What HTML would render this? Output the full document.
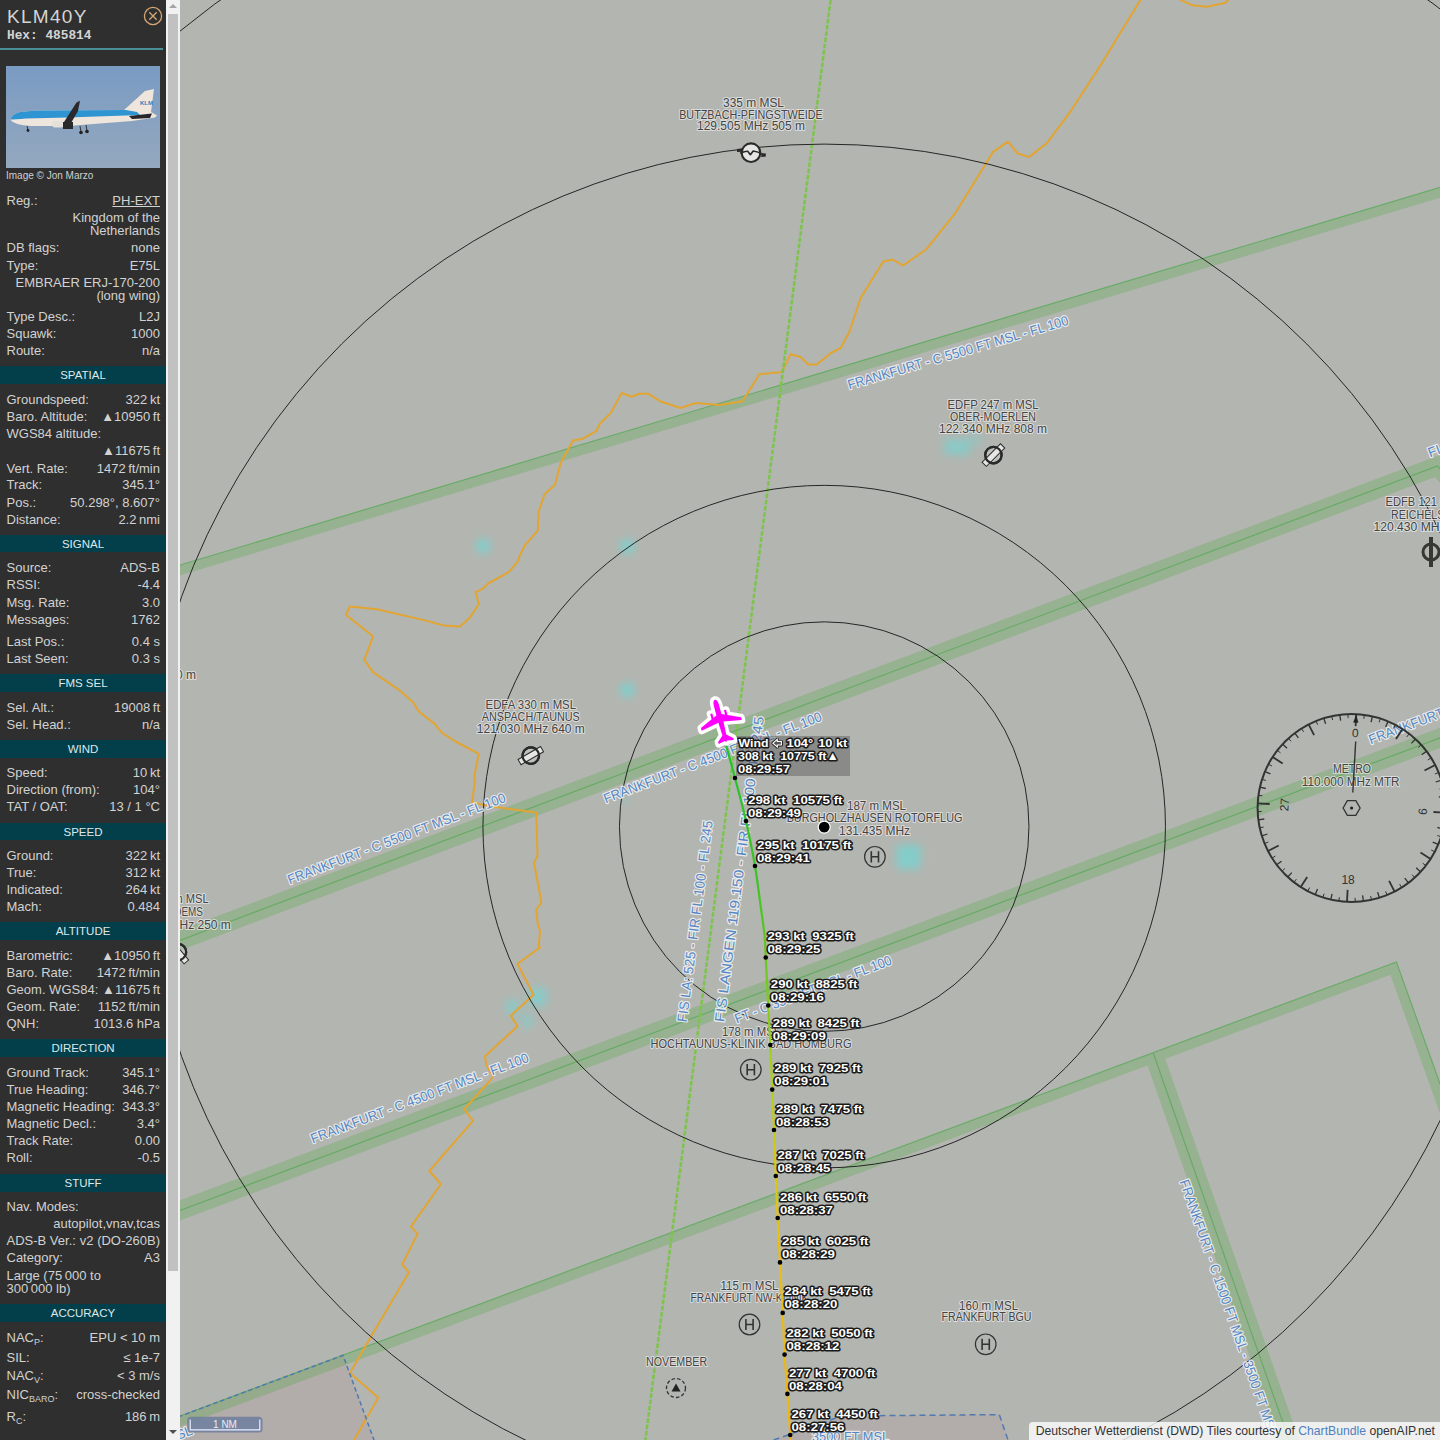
<!DOCTYPE html>
<html><head><meta charset="utf-8"><style>
*{margin:0;padding:0;box-sizing:border-box}
html,body{width:1440px;height:1440px;overflow:hidden;background:#b3b5b0;font-family:"Liberation Sans",sans-serif}
#map{position:absolute;left:0;top:0;width:1440px;height:1440px}
#map text{font-family:"Liberation Sans",sans-serif}
.ap{font-size:12px;fill:#444;stroke:#e8e8e8;stroke-opacity:0.75;stroke-width:2.2px;paint-order:stroke;stroke-linejoin:round}
.bl{font-size:13.6px;fill:#5586c4;stroke:#f4f4f4;stroke-opacity:0.85;stroke-width:2.4px;paint-order:stroke;stroke-linejoin:round}
.rz{font-size:12px;fill:#333}
.tk{font-size:11.8px;font-weight:bold;fill:#fff;stroke:#1a1a1a;stroke-width:3px;paint-order:stroke;stroke-linejoin:round}
.sc{font-size:10px;fill:#e8ecf4}
#side{position:absolute;left:0;top:0;width:166px;height:1440px;background:#2f2f2f;color:#d2d2d2;font-size:13px}
#sb{position:absolute;left:166px;top:0;width:14px;height:1440px;background:#f1f1f1}
#thumb{position:absolute;left:2px;top:14px;width:10px;height:1257px;background:#c1c1c1}
.lb{position:absolute;left:6.5px;height:16px;line-height:16px;white-space:nowrap}
.vl{position:absolute;right:6px;height:16px;line-height:16px;white-space:nowrap;text-align:right}
.hd{position:absolute;left:0;width:166px;height:17.6px;line-height:18.6px;background:#023f4a;color:#dde8ea;text-align:center;font-size:11.5px}
sub{font-size:9px;vertical-align:-3px;line-height:0}
#title{position:absolute;left:7px;top:6px;font-size:19px;letter-spacing:1.3px;color:#d4d4d4;line-height:22px}
#hex{position:absolute;left:7px;top:29px;font-family:"Liberation Mono",monospace;font-weight:bold;font-size:12.8px;color:#d4d4d4;line-height:14px}
#tline{position:absolute;left:0;top:48px;width:163px;height:2px;background:#4a8e98}
#cap{position:absolute;left:6px;top:170px;font-size:10px;color:#cfcfcf;line-height:12px}
#attr{position:absolute;left:1028.7px;top:1422.2px;width:412px;height:18px;background:rgba(255,255,255,0.78);border-top-left-radius:4px;font-size:12.2px;line-height:18px;color:#333;padding-left:7px;white-space:nowrap}
#attr span{color:#4f7fbf}
</style></head><body>
<svg id="map" width="1440" height="1440" viewBox="0 0 1440 1440">
<path d="M150,1427.5 L343,1355.3 L374,1440 L150,1440 Z" fill="#b2acaa"/>
<path d="M773.6,1440 L841.7,1416 L999.3,1414.6 L1008,1440 Z" fill="#b2acaa"/>
<defs><filter id="b3" x="-100%" y="-100%" width="300%" height="300%"><feGaussianBlur stdDeviation="3.2"/></filter><filter id="b5" x="-100%" y="-100%" width="300%" height="300%"><feGaussianBlur stdDeviation="4.5"/></filter></defs>
<rect x="476.5" y="539.5" width="13" height="13" fill="#80cfcc" opacity="1" filter="url(#b5)"/>
<rect x="620.7" y="539.9" width="13" height="13" fill="#80cfcc" opacity="1" filter="url(#b5)"/>
<rect x="620.7" y="683.6" width="13" height="13" fill="#80cfcc" opacity="1" filter="url(#b5)"/>
<rect x="620.5" y="795.5" width="9" height="9" fill="#80cfcc" opacity="0.3" filter="url(#b3)"/>
<rect x="896.6" y="844.8" width="24" height="24" fill="#80cfcc" opacity="0.95" filter="url(#b5)"/>
<rect x="944.0" y="439.0" width="26" height="16" fill="#80cfcc" opacity="0.8" filter="url(#b5)"/>
<rect x="968.0" y="435.0" width="14" height="10" fill="#80cfcc" opacity="0.5" filter="url(#b5)"/>
<rect x="528.6" y="987.8" width="18" height="18" fill="#80cfcc" opacity="0.85" filter="url(#b5)"/>
<rect x="505.6" y="1000.0" width="14" height="14" fill="#80cfcc" opacity="0.75" filter="url(#b5)"/>
<rect x="521.0" y="1015.0" width="12" height="12" fill="#80cfcc" opacity="0.7" filter="url(#b5)"/>
<path d="M151.4,578.8 L1461.4,186.2" fill="none" stroke="#5daa4f" stroke-opacity="0.32" stroke-width="10" stroke-linejoin="miter"/>
<path d="M150.0,574.0 L1460.0,181.4" fill="none" stroke="#52a852" stroke-opacity="0.72" stroke-width="1.15"/>
<path d="M150.0,951.7 L1437.5,466.0 L1460.0,491.0" fill="none" stroke="#5daa4f" stroke-opacity="0.32" stroke-width="19" stroke-linejoin="miter"/>
<path d="M150.0,951.7 L1437.5,466.0 L1460.0,491.0" fill="none" stroke="#52a852" stroke-opacity="0.72" stroke-width="1.15"/>
<path d="M150.0,1221.7 L1460.0,730.4" fill="none" stroke="#5daa4f" stroke-opacity="0.32" stroke-width="19" stroke-linejoin="miter"/>
<path d="M150.0,1221.7 L1460.0,730.4" fill="none" stroke="#52a852" stroke-opacity="0.72" stroke-width="1.15"/>
<path d="M151.7,1431.9 L1393.4,968.4 L1606.5,1563.6" fill="none" stroke="#5daa4f" stroke-opacity="0.32" stroke-width="10" stroke-linejoin="miter"/>
<path d="M150.0,1427.2 L1396.4,961.9 L1611.2,1561.9" fill="none" stroke="#52a852" stroke-opacity="0.72" stroke-width="1.15"/>
<defs><clipPath id="c5"><path d="M153.5,1436.5 L1399.9,971.3 L1600,1600 L0,1600 Z"/></clipPath></defs>
<g clip-path="url(#c5)"><path d="M1146.3,1033.3 L1300.7,1473.3" fill="none" stroke="#5daa4f" stroke-opacity="0.32" stroke-width="19" stroke-linejoin="miter"/></g>
<path d="M1153.3,1053.3 L1300.7,1473.3" fill="none" stroke="#52a852" stroke-opacity="0.72" stroke-width="1.15"/>
<path d="M354.0,1440.0 L378.3,1397.8 L350.0,1373.0 L371.0,1336.6 L408.9,1272.4 L402.2,1264.5 L417.6,1233.6 L410.9,1226.6 L441.0,1184.0 L429.3,1171.0 L473.0,1120.8 L464.3,1109.2 L490.5,1080.0 L493.0,1076.3 L486.3,1065.0 L485.0,1056.3 L517.5,1026.3 L510.8,1015.8 L533.5,994.7 L517.5,963.8 L540.0,947.5 L538.8,946.3 L540.0,931.3 L537.5,922.5 L536.3,910.0 L541.3,902.5 L538.8,887.5 L533.8,862.5 L537.5,856.3 L536.3,812.5 L490.0,806.3 L472.0,802.5 L474.5,785.0 L475.0,772.5 L478.8,753.8 L456.4,742.0 L442.0,732.9 L434.7,723.9 L418.5,711.3 L413.1,702.2 L398.6,689.6 L373.3,672.4 L364.3,659.8 L373.0,636.3 L345.9,614.7 L349.9,606.5 L377.0,609.2 L423.9,620.1 L443.8,625.5 L460.0,626.4 L470.0,617.4 L479.0,603.8 L475.4,592.1 L481.7,589.4 L488.9,583.0 L508.8,572.2 L517.8,561.4 L519.6,556.0 L525.0,545.1 L537.7,530.7 L538.6,510.8 L539.2,510.0 L544.5,494.2 L555.0,484.8 L560.6,463.0 L573.0,440.6 L583.0,438.7 L596.2,431.2 L600.0,423.7 L611.2,412.4 L616.8,402.0 L621.7,393.0 L631.8,396.7 L639.3,393.7 L648.0,393.7 L660.0,401.2 L680.6,408.0 L695.6,403.0 L720.0,405.0 L742.5,401.2 L759.4,374.2 L781.9,372.0 L790.5,354.3 L800.6,357.0 L808.1,364.5 L816.7,364.5 L830.6,353.2 L840.7,348.0 L849.4,331.8 L860.6,298.0 L883.1,261.7 L892.5,259.5 L903.0,265.5 L926.2,249.3 L956.2,211.8 L986.2,163.1 L993.0,151.9 L1008.0,141.7 L1017.3,153.3 L1028.9,157.1 L1046.7,143.3 L1070.0,112.2 L1101.1,64.4 L1120.0,33.3 L1141.1,-1.0" fill="none" stroke="#e3a531" stroke-width="2" stroke-linejoin="round"/>
<path d="M1178.9,-1.0 L1191.1,4.9 L1206.7,6.7 L1225.6,2.7 L1228.9,-1.0" fill="none" stroke="#e3a531" stroke-width="2" stroke-linejoin="round"/>
<line x1="830.6" y1="0" x2="645.4" y2="1440" stroke="#7cc44a" stroke-width="2.5" stroke-dasharray="4.6 1.7"/>
<path d="M150,1427.5 L343,1355.3 L374,1440" fill="none" stroke="#4f79b0" stroke-width="1.5" stroke-dasharray="4.5 3"/>
<path d="M773.6,1440 L841.7,1416 L999.3,1414.6 L1008,1440" fill="none" stroke="#4f79b0" stroke-width="1.5" stroke-dasharray="6 4"/>
<circle cx="824.2" cy="826.6" r="204.75" fill="none" stroke="#262626" stroke-width="1.0"/>
<circle cx="824.2" cy="826.6" r="341.25" fill="none" stroke="#262626" stroke-width="1.0"/>
<circle cx="824.2" cy="826.6" r="682.50" fill="none" stroke="#262626" stroke-width="1.0"/>
<circle cx="824.2" cy="826.6" r="1023.75" fill="none" stroke="#262626" stroke-width="1.0"/>
<text x="753.5" y="106.6" text-anchor="middle" class="ap" textLength="61.0" lengthAdjust="spacingAndGlyphs">335 m MSL</text>
<text x="751.0" y="118.5" text-anchor="middle" class="ap" textLength="143.6" lengthAdjust="spacingAndGlyphs">BUTZBACH-PFINGSTWEIDE</text>
<text x="751.0" y="130.1" text-anchor="middle" class="ap" textLength="108.0" lengthAdjust="spacingAndGlyphs">129.505 MHz 505 m</text>
<text x="993.0" y="408.7" text-anchor="middle" class="ap" textLength="91.0" lengthAdjust="spacingAndGlyphs">EDFP 247 m MSL</text>
<text x="993.0" y="420.7" text-anchor="middle" class="ap" textLength="86.0" lengthAdjust="spacingAndGlyphs">OBER-MOERLEN</text>
<text x="993.0" y="433.1" text-anchor="middle" class="ap" textLength="108.0" lengthAdjust="spacingAndGlyphs">122.340 MHz 808 m</text>
<text x="530.8" y="708.7" text-anchor="middle" class="ap" textLength="90.5" lengthAdjust="spacingAndGlyphs">EDFA 330 m MSL</text>
<text x="530.8" y="720.7" text-anchor="middle" class="ap" textLength="98.0" lengthAdjust="spacingAndGlyphs">ANSPACH/TAUNUS</text>
<text x="530.8" y="733.1" text-anchor="middle" class="ap" textLength="108.0" lengthAdjust="spacingAndGlyphs">121.030 MHz 640 m</text>
<text x="876.5" y="810.1" text-anchor="middle" class="ap" textLength="59.0" lengthAdjust="spacingAndGlyphs">187 m MSL</text>
<text x="874.5" y="822.4" text-anchor="middle" class="ap" textLength="175.7" lengthAdjust="spacingAndGlyphs">BURGHOLZHAUSEN ROTORFLUG</text>
<text x="874.5" y="834.6" text-anchor="middle" class="ap" textLength="71.0" lengthAdjust="spacingAndGlyphs">131.435 MHz</text>
<text x="751.0" y="1035.6" text-anchor="middle" class="ap" textLength="58.0" lengthAdjust="spacingAndGlyphs">178 m MSL</text>
<text x="751.0" y="1047.8" text-anchor="middle" class="ap" textLength="201.0" lengthAdjust="spacingAndGlyphs">HOCHTAUNUS-KLINIK BAD HOMBURG</text>
<text x="749.5" y="1290.1" text-anchor="middle" class="ap" textLength="58.0" lengthAdjust="spacingAndGlyphs">115 m MSL</text>
<text x="749.5" y="1302.4" text-anchor="middle" class="ap" textLength="118.0" lengthAdjust="spacingAndGlyphs">FRANKFURT NW-KLINIK</text>
<text x="988.6" y="1309.7" text-anchor="middle" class="ap" textLength="59.0" lengthAdjust="spacingAndGlyphs">160 m MSL</text>
<text x="986.5" y="1321.3" text-anchor="middle" class="ap" textLength="90.0" lengthAdjust="spacingAndGlyphs">FRANKFURT BGU</text>
<text x="676.6" y="1365.9" text-anchor="middle" class="ap" textLength="61.0" lengthAdjust="spacingAndGlyphs">NOVEMBER</text>
<text x="1352.0" y="773.4" text-anchor="middle" class="ap" textLength="38.0" lengthAdjust="spacingAndGlyphs">METRO</text>
<text x="1350.7" y="785.8" text-anchor="middle" class="ap" textLength="97.7" lengthAdjust="spacingAndGlyphs">110.000 MHz MTR</text>
<text x="1385.5" y="506.0" text-anchor="start" class="ap" textLength="90.0" lengthAdjust="spacingAndGlyphs">EDFB 121 m MSL</text>
<text x="1391.0" y="518.5" text-anchor="start" class="ap" textLength="80.0" lengthAdjust="spacingAndGlyphs">REICHELSHEIM</text>
<text x="1373.5" y="531.0" text-anchor="start" class="ap" textLength="115.0" lengthAdjust="spacingAndGlyphs">120.430 MHz 1180 m</text>
<text x="208.6" y="902.9" text-anchor="end" class="ap" textLength="90.0" lengthAdjust="spacingAndGlyphs">EDFG 118 m MSL</text>
<text x="203.0" y="915.7" text-anchor="end" class="ap" textLength="100.0" lengthAdjust="spacingAndGlyphs">GELNHAUSEN DEMS</text>
<text x="230.8" y="928.5" text-anchor="end" class="ap" textLength="108.0" lengthAdjust="spacingAndGlyphs">122.400 MHz 250 m</text>
<text x="196.0" y="678.8" text-anchor="end" class="ap" textLength="108.0" lengthAdjust="spacingAndGlyphs">123.000 MHz 640 m</text>
<text x="849.3" y="389.5" class="bl" textLength="229.4" lengthAdjust="spacingAndGlyphs" transform="rotate(-16.46 849.3 389.5)">FRANKFURT - C 5500 FT MSL - FL 100</text>
<text x="289.7" y="884.4" class="bl" textLength="232.3" lengthAdjust="spacingAndGlyphs" transform="rotate(-20.93 289.7 884.4)">FRANKFURT - C 5500 FT MSL - FL 100</text>
<text x="605.7" y="803.4" class="bl" textLength="232.3" lengthAdjust="spacingAndGlyphs" transform="rotate(-20.93 605.7 803.4)">FRANKFURT - C 4500 FT MSL - FL 100</text>
<text x="312.7" y="1143.4" class="bl" textLength="232.0" lengthAdjust="spacingAndGlyphs" transform="rotate(-20.70 312.7 1143.4)">FRANKFURT - C 4500 FT MSL - FL 100</text>
<text x="736.7" y="1023.4" class="bl" textLength="167.0" lengthAdjust="spacingAndGlyphs" transform="rotate(-20.88 736.7 1023.4)">FT - C 3500 FT MSL - FL 100</text>
<text x="1370.7" y="744.4" class="bl" textLength="235.1" lengthAdjust="spacingAndGlyphs" transform="rotate(-20.67 1370.7 744.4)">FRANKFURT - C 4500 FT MSL - FL 100</text>
<text x="1430.1" y="457.4" class="bl" textLength="42.0" lengthAdjust="spacingAndGlyphs" transform="rotate(-20.56 1430.1 457.4)">FL 100</text>
<text x="1179.6" y="1181.5" class="bl" textLength="270.0" lengthAdjust="spacingAndGlyphs" transform="rotate(70.70 1179.6 1181.5)">FRANKFURT - C 1500 FT MSL - 3500 FT MSL</text>
<text x="724.1" y="1022.6" class="bl" textLength="308.0" lengthAdjust="spacingAndGlyphs" transform="rotate(-82.60 724.1 1022.6)">FIS LANGEN 119.150 - FIR FL 100 - FL 245</text>
<text x="686.6" y="1022.6" class="bl" textLength="203.0" lengthAdjust="spacingAndGlyphs" transform="rotate(-82.60 686.6 1022.6)">FIS LA: 525 - FIR FL 100 - FL 245</text>
<text x="889.0" y="1441.2" text-anchor="end" class="bl" textLength="77.0" lengthAdjust="spacingAndGlyphs">3500 FT MSL</text>
<text x="178" y="1440" class="bl" transform="rotate(-20.7 178 1440)">SL</text>
<g transform="translate(993.4,455.1) rotate(-45)"><circle r="8.2" fill="#d8d8d6" fill-opacity="0.35" stroke="#2a2a2a" stroke-width="2.2"/><rect x="-13" y="-3" width="26" height="6" fill="#e6e6e4" stroke="#2a2a2a" stroke-width="1"/><circle r="8.2" fill="none" stroke="#2a2a2a" stroke-width="2.2"/></g>
<g transform="translate(530.8,755.6) rotate(-30)"><circle r="8.2" fill="#d8d8d6" fill-opacity="0.35" stroke="#2a2a2a" stroke-width="2.2"/><rect x="-13" y="-3" width="26" height="6" fill="#e6e6e4" stroke="#2a2a2a" stroke-width="1"/><circle r="8.2" fill="none" stroke="#2a2a2a" stroke-width="2.2"/></g>
<g transform="translate(178,952) rotate(50)"><circle r="8.2" fill="#d8d8d6" fill-opacity="0.35" stroke="#2a2a2a" stroke-width="2.2"/><rect x="-13" y="-3" width="26" height="6" fill="#e6e6e4" stroke="#2a2a2a" stroke-width="1"/><circle r="8.2" fill="none" stroke="#2a2a2a" stroke-width="2.2"/></g>
<g transform="translate(751,152.7)"><circle r="9.3" fill="#e6e6e4" stroke="#2a2a2a" stroke-width="2.1"/><path d="M-10.8,0.6 C-8,-0.6 -5,-1.6 -3.3,-1.4 L-0.6,2 L2.2,-1.7 C5,-1.5 9,0 11.9,2" fill="none" stroke="#2a2a2a" stroke-width="1.7" stroke-linejoin="round"/><path d="M-14,-3.6 L-7.8,-4.4 L-8.5,-1 L-14,-0.6 Z M11,0.6 L15,0.9 L14.6,4 L10,4.2 Z" fill="#2a2a2a"/></g>
<g transform="translate(1431,552)"><circle r="8" fill="none" stroke="#383833" stroke-width="3"/><rect x="-2" y="-15" width="4" height="30" fill="#383833"/></g>
<g transform="translate(874.9,856.8)"><circle r="10.3" fill="none" stroke="#333" stroke-width="1.2"/><path d="M-3.6,-5.6 V5.6 M3.6,-5.6 V5.6 M-3.6,0 H3.6" stroke="#333" stroke-width="1.6" fill="none"/></g>
<g transform="translate(750.8,1069.7)"><circle r="10.3" fill="none" stroke="#333" stroke-width="1.2"/><path d="M-3.6,-5.6 V5.6 M3.6,-5.6 V5.6 M-3.6,0 H3.6" stroke="#333" stroke-width="1.6" fill="none"/></g>
<g transform="translate(749.5,1324.5)"><circle r="10.3" fill="none" stroke="#333" stroke-width="1.2"/><path d="M-3.6,-5.6 V5.6 M3.6,-5.6 V5.6 M-3.6,0 H3.6" stroke="#333" stroke-width="1.6" fill="none"/></g>
<g transform="translate(985.7,1344.3)"><circle r="10.3" fill="none" stroke="#333" stroke-width="1.2"/><path d="M-3.6,-5.6 V5.6 M3.6,-5.6 V5.6 M-3.6,0 H3.6" stroke="#333" stroke-width="1.6" fill="none"/></g>
<g transform="translate(676,1388)"><circle r="9.5" fill="none" stroke="#333" stroke-width="1.3" stroke-dasharray="3.5 2.2"/><path d="M0,-4.5 L4.5,3.5 L-4.5,3.5 Z" fill="#222"/></g>
<circle cx="824.2" cy="827.1" r="6" fill="#000" stroke="#fff" stroke-width="1.2"/>
<g transform="translate(1351.6,808)"><circle r="94" fill="none" stroke="#333" stroke-width="2"/><line x1="4.6" y1="-93.9" x2="4.0" y2="-81.9" stroke="#333" stroke-width="1.8"/><line x1="12.8" y1="-93.1" x2="12.2" y2="-89.2" stroke="#333" stroke-width="1.0"/><line x1="20.8" y1="-91.7" x2="19.5" y2="-85.8" stroke="#333" stroke-width="1.3"/><line x1="28.7" y1="-89.5" x2="27.5" y2="-85.7" stroke="#333" stroke-width="1.0"/><line x1="36.4" y1="-86.7" x2="34.1" y2="-81.1" stroke="#333" stroke-width="1.3"/><line x1="43.8" y1="-83.2" x2="42.0" y2="-79.6" stroke="#333" stroke-width="1.0"/><line x1="50.9" y1="-79.0" x2="44.4" y2="-68.9" stroke="#333" stroke-width="1.8"/><line x1="57.6" y1="-74.3" x2="55.2" y2="-71.1" stroke="#333" stroke-width="1.0"/><line x1="63.9" y1="-69.0" x2="59.8" y2="-64.6" stroke="#333" stroke-width="1.3"/><line x1="69.6" y1="-63.1" x2="66.7" y2="-60.5" stroke="#333" stroke-width="1.0"/><line x1="74.9" y1="-56.8" x2="70.1" y2="-53.2" stroke="#333" stroke-width="1.3"/><line x1="79.5" y1="-50.1" x2="76.2" y2="-48.0" stroke="#333" stroke-width="1.0"/><line x1="83.6" y1="-43.0" x2="72.9" y2="-37.5" stroke="#333" stroke-width="1.8"/><line x1="87.0" y1="-35.5" x2="83.3" y2="-34.0" stroke="#333" stroke-width="1.0"/><line x1="89.8" y1="-27.8" x2="84.1" y2="-26.0" stroke="#333" stroke-width="1.3"/><line x1="91.9" y1="-19.9" x2="88.0" y2="-19.0" stroke="#333" stroke-width="1.0"/><line x1="93.3" y1="-11.8" x2="87.3" y2="-11.0" stroke="#333" stroke-width="1.3"/><line x1="93.9" y1="-3.6" x2="89.9" y2="-3.5" stroke="#333" stroke-width="1.0"/><line x1="93.9" y1="4.6" x2="81.9" y2="4.0" stroke="#333" stroke-width="1.8"/><line x1="93.1" y1="12.8" x2="89.2" y2="12.2" stroke="#333" stroke-width="1.0"/><line x1="91.7" y1="20.8" x2="85.8" y2="19.5" stroke="#333" stroke-width="1.3"/><line x1="89.5" y1="28.7" x2="85.7" y2="27.5" stroke="#333" stroke-width="1.0"/><line x1="86.7" y1="36.4" x2="81.1" y2="34.1" stroke="#333" stroke-width="1.3"/><line x1="83.2" y1="43.8" x2="79.6" y2="42.0" stroke="#333" stroke-width="1.0"/><line x1="79.0" y1="50.9" x2="68.9" y2="44.4" stroke="#333" stroke-width="1.8"/><line x1="74.3" y1="57.6" x2="71.1" y2="55.2" stroke="#333" stroke-width="1.0"/><line x1="69.0" y1="63.9" x2="64.6" y2="59.8" stroke="#333" stroke-width="1.3"/><line x1="63.1" y1="69.6" x2="60.5" y2="66.7" stroke="#333" stroke-width="1.0"/><line x1="56.8" y1="74.9" x2="53.2" y2="70.1" stroke="#333" stroke-width="1.3"/><line x1="50.1" y1="79.5" x2="48.0" y2="76.2" stroke="#333" stroke-width="1.0"/><line x1="43.0" y1="83.6" x2="37.5" y2="72.9" stroke="#333" stroke-width="1.8"/><line x1="35.5" y1="87.0" x2="34.0" y2="83.3" stroke="#333" stroke-width="1.0"/><line x1="27.8" y1="89.8" x2="26.0" y2="84.1" stroke="#333" stroke-width="1.3"/><line x1="19.9" y1="91.9" x2="19.0" y2="88.0" stroke="#333" stroke-width="1.0"/><line x1="11.8" y1="93.3" x2="11.0" y2="87.3" stroke="#333" stroke-width="1.3"/><line x1="3.6" y1="93.9" x2="3.5" y2="89.9" stroke="#333" stroke-width="1.0"/><line x1="-4.6" y1="93.9" x2="-4.0" y2="81.9" stroke="#333" stroke-width="1.8"/><line x1="-12.8" y1="93.1" x2="-12.2" y2="89.2" stroke="#333" stroke-width="1.0"/><line x1="-20.8" y1="91.7" x2="-19.5" y2="85.8" stroke="#333" stroke-width="1.3"/><line x1="-28.7" y1="89.5" x2="-27.5" y2="85.7" stroke="#333" stroke-width="1.0"/><line x1="-36.4" y1="86.7" x2="-34.1" y2="81.1" stroke="#333" stroke-width="1.3"/><line x1="-43.8" y1="83.2" x2="-42.0" y2="79.6" stroke="#333" stroke-width="1.0"/><line x1="-50.9" y1="79.0" x2="-44.4" y2="68.9" stroke="#333" stroke-width="1.8"/><line x1="-57.6" y1="74.3" x2="-55.2" y2="71.1" stroke="#333" stroke-width="1.0"/><line x1="-63.9" y1="69.0" x2="-59.8" y2="64.6" stroke="#333" stroke-width="1.3"/><line x1="-69.6" y1="63.1" x2="-66.7" y2="60.5" stroke="#333" stroke-width="1.0"/><line x1="-74.9" y1="56.8" x2="-70.1" y2="53.2" stroke="#333" stroke-width="1.3"/><line x1="-79.5" y1="50.1" x2="-76.2" y2="48.0" stroke="#333" stroke-width="1.0"/><line x1="-83.6" y1="43.0" x2="-72.9" y2="37.5" stroke="#333" stroke-width="1.8"/><line x1="-87.0" y1="35.5" x2="-83.3" y2="34.0" stroke="#333" stroke-width="1.0"/><line x1="-89.8" y1="27.8" x2="-84.1" y2="26.0" stroke="#333" stroke-width="1.3"/><line x1="-91.9" y1="19.9" x2="-88.0" y2="19.0" stroke="#333" stroke-width="1.0"/><line x1="-93.3" y1="11.8" x2="-87.3" y2="11.0" stroke="#333" stroke-width="1.3"/><line x1="-93.9" y1="3.6" x2="-89.9" y2="3.5" stroke="#333" stroke-width="1.0"/><line x1="-93.9" y1="-4.6" x2="-81.9" y2="-4.0" stroke="#333" stroke-width="1.8"/><line x1="-93.1" y1="-12.8" x2="-89.2" y2="-12.2" stroke="#333" stroke-width="1.0"/><line x1="-91.7" y1="-20.8" x2="-85.8" y2="-19.5" stroke="#333" stroke-width="1.3"/><line x1="-89.5" y1="-28.7" x2="-85.7" y2="-27.5" stroke="#333" stroke-width="1.0"/><line x1="-86.7" y1="-36.4" x2="-81.1" y2="-34.1" stroke="#333" stroke-width="1.3"/><line x1="-83.2" y1="-43.8" x2="-79.6" y2="-42.0" stroke="#333" stroke-width="1.0"/><line x1="-79.0" y1="-50.9" x2="-68.9" y2="-44.4" stroke="#333" stroke-width="1.8"/><line x1="-74.3" y1="-57.6" x2="-71.1" y2="-55.2" stroke="#333" stroke-width="1.0"/><line x1="-69.0" y1="-63.9" x2="-64.6" y2="-59.8" stroke="#333" stroke-width="1.3"/><line x1="-63.1" y1="-69.6" x2="-60.5" y2="-66.7" stroke="#333" stroke-width="1.0"/><line x1="-56.8" y1="-74.9" x2="-53.2" y2="-70.1" stroke="#333" stroke-width="1.3"/><line x1="-50.1" y1="-79.5" x2="-48.0" y2="-76.2" stroke="#333" stroke-width="1.0"/><line x1="-43.0" y1="-83.6" x2="-37.5" y2="-72.9" stroke="#333" stroke-width="1.8"/><line x1="-35.5" y1="-87.0" x2="-34.0" y2="-83.3" stroke="#333" stroke-width="1.0"/><line x1="-27.8" y1="-89.8" x2="-26.0" y2="-84.1" stroke="#333" stroke-width="1.3"/><line x1="-19.9" y1="-91.9" x2="-19.0" y2="-88.0" stroke="#333" stroke-width="1.0"/><line x1="-11.8" y1="-93.3" x2="-11.0" y2="-87.3" stroke="#333" stroke-width="1.3"/><line x1="-3.6" y1="-93.9" x2="-3.5" y2="-89.9" stroke="#333" stroke-width="1.0"/><path d="M0,-93.5 L2.6,-85.5 L-2.6,-85.5 Z" fill="#222" transform="rotate(2.8)"/><line x1="1.2" y1="-15.5" x2="4.1" y2="-66.5" stroke="#333" stroke-width="1.4"/><path d="M-8.5,0 L-4.25,-7.4 L4.25,-7.4 L8.5,0 L4.25,7.4 L-4.25,7.4 Z" fill="none" stroke="#333" stroke-width="1.3"/><circle r="1.6" fill="#222"/><text x="3.7" y="-74.9" class="rz" text-anchor="middle" dominant-baseline="central" transform="rotate(2.8 3.7 -74.9)">0</text><text x="-3.5" y="72" class="rz" text-anchor="middle" dominant-baseline="central">18</text><text x="-66.9" y="-3.3" class="rz" text-anchor="middle" dominant-baseline="central" transform="rotate(272.8 -66.9 -3.3)">27</text><text x="70.9" y="3.5" class="rz" text-anchor="middle" dominant-baseline="central" transform="rotate(92.8 70.9 3.5)">9</text></g>
<defs><linearGradient id="trk" gradientUnits="userSpaceOnUse" x1="0" y1="745" x2="0" y2="1440"><stop offset="0" stop-color="#22c22a"/><stop offset="0.2" stop-color="#3cc425"/><stop offset="0.33" stop-color="#70c820"/><stop offset="0.45" stop-color="#a2d01a"/><stop offset="0.6" stop-color="#d4cc10"/><stop offset="0.72" stop-color="#e8c010"/><stop offset="1" stop-color="#ecb41a"/></linearGradient></defs>
<path d="M726,745 C727.5,750.5 731.7,765.3 735,778 C738.3,790.7 742.7,806.3 746,821 C749.3,835.7 752.6,852.0 755,866 C757.4,880.0 758.9,893.5 760.5,905 C762.1,916.5 763.6,926.2 764.5,935 C765.4,943.8 765.1,945.8 765.75,957.5 C766.4,969.2 767.4,990.9 768.2,1005.5 C769.0,1020.1 769.6,1031.0 770.3,1045 C771.0,1059.0 771.6,1075.4 772.2,1089.6 C772.8,1103.8 773.4,1115.6 774,1130 C774.6,1144.4 775.2,1161.3 775.8,1176 C776.4,1190.7 777.0,1203.6 777.7,1218 C778.4,1232.4 779.2,1246.6 780,1262.4 C780.8,1278.2 781.9,1297.5 782.7,1312.9 C783.5,1328.3 783.8,1341.1 784.6,1354.6 C785.4,1368.1 786.5,1380.5 787.4,1393.9 C788.3,1407.3 789.7,1426.5 790.2,1435 C790.7,1443.5 790.5,1443.3 790.6,1445" fill="none" stroke="url(#trk)" stroke-width="2.2"/>
<circle cx="735" cy="778" r="2.3" fill="#000"/>
<circle cx="746" cy="821" r="2.3" fill="#000"/>
<circle cx="755" cy="866" r="2.3" fill="#000"/>
<circle cx="765.75" cy="957.5" r="2.3" fill="#000"/>
<circle cx="768.2" cy="1005.5" r="2.3" fill="#000"/>
<circle cx="770.3" cy="1045" r="2.3" fill="#000"/>
<circle cx="772.2" cy="1089.6" r="2.3" fill="#000"/>
<circle cx="774" cy="1130" r="2.3" fill="#000"/>
<circle cx="775.8" cy="1176" r="2.3" fill="#000"/>
<circle cx="777.7" cy="1218" r="2.3" fill="#000"/>
<circle cx="780" cy="1262.4" r="2.3" fill="#000"/>
<circle cx="782.7" cy="1312.9" r="2.3" fill="#000"/>
<circle cx="784.6" cy="1354.6" r="2.3" fill="#000"/>
<circle cx="787.4" cy="1393.9" r="2.3" fill="#000"/>
<circle cx="790.2" cy="1435" r="2.3" fill="#000"/>
<rect x="736" y="736" width="114" height="40" fill="#505050" fill-opacity="0.42"/>
<text xml:space="preserve" x="738.6" y="747.4" class="tk" textLength="30.0" lengthAdjust="spacingAndGlyphs">Wind</text>
<path d="M772.9,743.2 L777.3,739.3 L777.3,741.4 L781.4,741.4 L781.4,745 L777.3,745 L777.3,747.1 Z" fill="#3a3a3a" stroke="#1a1a1a" stroke-width="3" stroke-linejoin="round"/>
<path d="M772.9,743.2 L777.3,739.3 L777.3,741.4 L781.4,741.4 L781.4,745 L777.3,745 L777.3,747.1 Z" fill="#555" stroke="#fff" stroke-width="1.1" stroke-linejoin="miter"/>
<text xml:space="preserve" x="786.5" y="747.4" class="tk" textLength="26.7" lengthAdjust="spacingAndGlyphs">104°</text>
<text xml:space="preserve" x="818.2" y="747.4" class="tk" textLength="29.1" lengthAdjust="spacingAndGlyphs">10 kt</text>
<text xml:space="preserve" x="738.0" y="760.4" class="tk" textLength="100.8" lengthAdjust="spacingAndGlyphs">308 kt  10775 ft▲</text>
<text xml:space="preserve" x="738.0" y="773.4" class="tk" textLength="52.0" lengthAdjust="spacingAndGlyphs">08:29:57</text>
<text xml:space="preserve" x="748.0" y="804.4" class="tk" textLength="94.5" lengthAdjust="spacingAndGlyphs">298 kt  10575 ft</text>
<text xml:space="preserve" x="748.0" y="817.1" class="tk" textLength="53.0" lengthAdjust="spacingAndGlyphs">08:29:49</text>
<text xml:space="preserve" x="757.0" y="849.4" class="tk" textLength="94.5" lengthAdjust="spacingAndGlyphs">295 kt  10175 ft</text>
<text xml:space="preserve" x="757.0" y="862.1" class="tk" textLength="53.0" lengthAdjust="spacingAndGlyphs">08:29:41</text>
<text xml:space="preserve" x="767.5" y="940.1" class="tk" textLength="86.5" lengthAdjust="spacingAndGlyphs">293 kt  9325 ft</text>
<text xml:space="preserve" x="767.5" y="952.8" class="tk" textLength="53.0" lengthAdjust="spacingAndGlyphs">08:29:25</text>
<text xml:space="preserve" x="770.8" y="988.4" class="tk" textLength="86.5" lengthAdjust="spacingAndGlyphs">290 kt  8825 ft</text>
<text xml:space="preserve" x="770.8" y="1001.1" class="tk" textLength="53.0" lengthAdjust="spacingAndGlyphs">08:29:16</text>
<text xml:space="preserve" x="772.8" y="1027.4" class="tk" textLength="86.5" lengthAdjust="spacingAndGlyphs">289 kt  8425 ft</text>
<text xml:space="preserve" x="772.8" y="1040.1" class="tk" textLength="53.0" lengthAdjust="spacingAndGlyphs">08:29:09</text>
<text xml:space="preserve" x="774.3" y="1072.4" class="tk" textLength="86.5" lengthAdjust="spacingAndGlyphs">289 kt  7925 ft</text>
<text xml:space="preserve" x="774.3" y="1085.1" class="tk" textLength="53.0" lengthAdjust="spacingAndGlyphs">08:29:01</text>
<text xml:space="preserve" x="776.0" y="1113.0" class="tk" textLength="86.5" lengthAdjust="spacingAndGlyphs">289 kt  7475 ft</text>
<text xml:space="preserve" x="776.0" y="1125.7" class="tk" textLength="53.0" lengthAdjust="spacingAndGlyphs">08:28:53</text>
<text xml:space="preserve" x="777.5" y="1158.8" class="tk" textLength="86.5" lengthAdjust="spacingAndGlyphs">287 kt  7025 ft</text>
<text xml:space="preserve" x="777.5" y="1171.5" class="tk" textLength="53.0" lengthAdjust="spacingAndGlyphs">08:28:45</text>
<text xml:space="preserve" x="780.0" y="1201.0" class="tk" textLength="86.5" lengthAdjust="spacingAndGlyphs">286 kt  6550 ft</text>
<text xml:space="preserve" x="780.0" y="1213.7" class="tk" textLength="53.0" lengthAdjust="spacingAndGlyphs">08:28:37</text>
<text xml:space="preserve" x="782.0" y="1245.4" class="tk" textLength="86.5" lengthAdjust="spacingAndGlyphs">285 kt  6025 ft</text>
<text xml:space="preserve" x="782.0" y="1258.1" class="tk" textLength="53.0" lengthAdjust="spacingAndGlyphs">08:28:29</text>
<text xml:space="preserve" x="784.5" y="1295.4" class="tk" textLength="86.5" lengthAdjust="spacingAndGlyphs">284 kt  5475 ft</text>
<text xml:space="preserve" x="784.5" y="1308.1" class="tk" textLength="53.0" lengthAdjust="spacingAndGlyphs">08:28:20</text>
<text xml:space="preserve" x="786.5" y="1337.1" class="tk" textLength="86.5" lengthAdjust="spacingAndGlyphs">282 kt  5050 ft</text>
<text xml:space="preserve" x="786.5" y="1349.8" class="tk" textLength="53.0" lengthAdjust="spacingAndGlyphs">08:28:12</text>
<text xml:space="preserve" x="789.0" y="1376.9" class="tk" textLength="86.5" lengthAdjust="spacingAndGlyphs">277 kt  4700 ft</text>
<text xml:space="preserve" x="789.0" y="1389.6" class="tk" textLength="53.0" lengthAdjust="spacingAndGlyphs">08:28:04</text>
<text xml:space="preserve" x="791.5" y="1417.9" class="tk" textLength="86.5" lengthAdjust="spacingAndGlyphs">267 kt  4450 ft</text>
<text xml:space="preserve" x="791.5" y="1430.6" class="tk" textLength="53.0" lengthAdjust="spacingAndGlyphs">08:27:56</text>
<g transform="translate(720.6,721) rotate(-15)"><path d="M0,-22 C1.6,-22 2.6,-19.5 2.6,-16 L2.6,-6.5 L6,-5 L6,-9.5 L8.2,-9.5 L8.2,-4 L20.8,1.6 L20.8,4.6 L2.6,1.2 L2,14.5 L7.8,19.6 L7.8,21.8 L1,20.4 L0,22 L-1,20.4 L-7.8,21.8 L-7.8,19.6 L-2,14.5 L-2.6,1.2 L-20.8,4.6 L-20.8,1.6 L-8.2,-4 L-8.2,-9.5 L-6,-9.5 L-6,-5 L-2.6,-6.5 L-2.6,-16 C-2.6,-19.5 -1.6,-22 0,-22 Z" fill="#fff" stroke="#fff" stroke-width="7" stroke-linejoin="round"/><path d="M0,-22 C1.6,-22 2.6,-19.5 2.6,-16 L2.6,-6.5 L6,-5 L6,-9.5 L8.2,-9.5 L8.2,-4 L20.8,1.6 L20.8,4.6 L2.6,1.2 L2,14.5 L7.8,19.6 L7.8,21.8 L1,20.4 L0,22 L-1,20.4 L-7.8,21.8 L-7.8,19.6 L-2,14.5 L-2.6,1.2 L-20.8,4.6 L-20.8,1.6 L-8.2,-4 L-8.2,-9.5 L-6,-9.5 L-6,-5 L-2.6,-6.5 L-2.6,-16 C-2.6,-19.5 -1.6,-22 0,-22 Z" fill="#ff00ff"/></g>
<rect x="187.3" y="1416.7" width="75.2" height="15.8" rx="3.5" fill="#6a7d9e" fill-opacity="0.82"/>
<path d="M190.2,1419.5 V1429.8 H259.8 V1419.5" fill="none" stroke="#eef" stroke-width="1.2"/>
<text x="225" y="1427.6" class="sc" text-anchor="middle">1 NM</text>
</svg>
<div id="attr">Deutscher Wetterdienst (DWD) Tiles courtesy of <span>ChartBundle</span> openAIP.net</div>
<div id="side">
<div id="title">KLM40Y</div>
<div id="hex">Hex: 485814</div>
<svg style="position:absolute;left:143px;top:6px" width="20" height="20"><circle cx="10" cy="10" r="8.6" fill="none" stroke="#d5a773" stroke-width="1.3"/><path d="M6.3,6.3 L13.7,13.7 M13.7,6.3 L6.3,13.7" stroke="#d5a773" stroke-width="1.3"/></svg>
<div id="tline"></div>
<svg style="position:absolute;left:6px;top:66px" width="154" height="102" viewBox="0 0 154 102">
<defs><linearGradient id="sky" x1="0" y1="0" x2="0" y2="1"><stop offset="0" stop-color="#7a9bc3"/><stop offset="1" stop-color="#94a8be"/></linearGradient></defs>
<rect width="154" height="102" fill="url(#sky)"/>
<path d="M4.6,53 Q6,48 14,46 L30,44.5 L118,44 L139,25 L148,23 L145,46 L151,49.5 L149,51.5 L126,55 L62,60 L25,60 Q8,59 4.6,54 Z" fill="#eee5dc"/>
<path d="M4.6,53 Q6,48 14,46 L30,44.5 L120,44 L131,46 L134,49 L62,51.5 L20,52.5 Q8,53.5 4.6,53.5 Z" fill="#2e94d2"/>
<path d="M58,56 L70.5,36.5 L74,34.8 L72,45 L65,57 Z" fill="#2a2a2e"/>
<path d="M123,50 L146,47.5 L144,52 L126,53 Z" fill="#26262a"/>
<rect x="46" y="55" width="12" height="6.5" rx="3" fill="#e4e0da"/>
<rect x="57" y="56" width="10" height="7" fill="#2a2a2a"/>
<path d="M21,60 L22,64 M74,60 L75,66 M80,59 L81,65" stroke="#333" stroke-width="1"/>
<circle cx="22" cy="64.5" r="1.4" fill="#222"/><circle cx="75" cy="66.5" r="1.8" fill="#222"/><circle cx="81" cy="65.5" r="1.8" fill="#222"/>
<text x="134" y="39" font-size="6" font-weight="bold" fill="#2f7fc0" font-family="Liberation Sans">KLM</text>
</svg>
<div id="cap">Image © Jon Marzo</div>
<div class="lb" style="top:192.60px">Reg.:</div>
<div class="vl" style="top:192.60px"><u>PH-EXT</u></div>
<div class="vl" style="top:209.60px">Kingdom of the</div>
<div class="vl" style="top:222.60px">Netherlands</div>
<div class="lb" style="top:239.60px">DB flags:</div>
<div class="vl" style="top:239.60px">none</div>
<div class="lb" style="top:257.60px">Type:</div>
<div class="vl" style="top:257.60px">E75L</div>
<div class="vl" style="top:274.60px">EMBRAER ERJ-170-200</div>
<div class="vl" style="top:287.60px">(long wing)</div>
<div class="lb" style="top:308.60px">Type Desc.:</div>
<div class="vl" style="top:308.60px">L2J</div>
<div class="lb" style="top:325.60px">Squawk:</div>
<div class="vl" style="top:325.60px">1000</div>
<div class="lb" style="top:342.60px">Route:</div>
<div class="vl" style="top:342.60px">n/a</div>
<div class="hd" style="top:366.30px">SPATIAL</div>
<div class="lb" style="top:391.60px">Groundspeed:</div>
<div class="vl" style="top:391.60px">322&#8201;kt</div>
<div class="lb" style="top:409.10px">Baro. Altitude:</div>
<div class="vl" style="top:409.10px">&#9650;10950&#8201;ft</div>
<div class="lb" style="top:426.10px">WGS84 altitude:</div>
<div class="vl" style="top:443.10px">&#9650;11675&#8201;ft</div>
<div class="lb" style="top:460.60px">Vert. Rate:</div>
<div class="vl" style="top:460.60px">1472&#8201;ft/min</div>
<div class="lb" style="top:477.10px">Track:</div>
<div class="vl" style="top:477.10px">345.1&deg;</div>
<div class="lb" style="top:494.60px">Pos.:</div>
<div class="vl" style="top:494.60px">50.298&deg;, 8.607&deg;</div>
<div class="lb" style="top:511.60px">Distance:</div>
<div class="vl" style="top:511.60px">2.2&#8201;nmi</div>
<div class="hd" style="top:534.80px">SIGNAL</div>
<div class="lb" style="top:560.10px">Source:</div>
<div class="vl" style="top:560.10px">ADS-B</div>
<div class="lb" style="top:577.10px">RSSI:</div>
<div class="vl" style="top:577.10px">-4.4</div>
<div class="lb" style="top:594.60px">Msg. Rate:</div>
<div class="vl" style="top:594.60px">3.0</div>
<div class="lb" style="top:611.60px">Messages:</div>
<div class="vl" style="top:611.60px">1762</div>
<div class="lb" style="top:633.60px">Last Pos.:</div>
<div class="vl" style="top:633.60px">0.4 s</div>
<div class="lb" style="top:650.60px">Last Seen:</div>
<div class="vl" style="top:650.60px">0.3 s</div>
<div class="hd" style="top:674.30px">FMS SEL</div>
<div class="lb" style="top:699.60px">Sel. Alt.:</div>
<div class="vl" style="top:699.60px">19008&#8201;ft</div>
<div class="lb" style="top:716.60px">Sel. Head.:</div>
<div class="vl" style="top:716.60px">n/a</div>
<div class="hd" style="top:740.30px">WIND</div>
<div class="lb" style="top:765.10px">Speed:</div>
<div class="vl" style="top:765.10px">10&#8201;kt</div>
<div class="lb" style="top:782.10px">Direction (from):</div>
<div class="vl" style="top:782.10px">104&deg;</div>
<div class="lb" style="top:799.10px">TAT / OAT:</div>
<div class="vl" style="top:799.10px">13 / 1 &deg;C</div>
<div class="hd" style="top:822.80px">SPEED</div>
<div class="lb" style="top:848.10px">Ground:</div>
<div class="vl" style="top:848.10px">322&#8201;kt</div>
<div class="lb" style="top:865.10px">True:</div>
<div class="vl" style="top:865.10px">312&#8201;kt</div>
<div class="lb" style="top:882.10px">Indicated:</div>
<div class="vl" style="top:882.10px">264&#8201;kt</div>
<div class="lb" style="top:899.10px">Mach:</div>
<div class="vl" style="top:899.10px">0.484</div>
<div class="hd" style="top:922.30px">ALTITUDE</div>
<div class="lb" style="top:948.10px">Barometric:</div>
<div class="vl" style="top:948.10px">&#9650;10950&#8201;ft</div>
<div class="lb" style="top:965.10px">Baro. Rate:</div>
<div class="vl" style="top:965.10px">1472&#8201;ft/min</div>
<div class="lb" style="top:982.10px">Geom. WGS84:</div>
<div class="vl" style="top:982.10px">&#9650;11675&#8201;ft</div>
<div class="lb" style="top:999.10px">Geom. Rate:</div>
<div class="vl" style="top:999.10px">1152&#8201;ft/min</div>
<div class="lb" style="top:1016.10px">QNH:</div>
<div class="vl" style="top:1016.10px">1013.6 hPa</div>
<div class="hd" style="top:1039.30px">DIRECTION</div>
<div class="lb" style="top:1064.60px">Ground Track:</div>
<div class="vl" style="top:1064.60px">345.1&deg;</div>
<div class="lb" style="top:1082.10px">True Heading:</div>
<div class="vl" style="top:1082.10px">346.7&deg;</div>
<div class="lb" style="top:1099.10px">Magnetic Heading:</div>
<div class="vl" style="top:1099.10px">343.3&deg;</div>
<div class="lb" style="top:1116.10px">Magnetic Decl.:</div>
<div class="vl" style="top:1116.10px">3.4&deg;</div>
<div class="lb" style="top:1133.10px">Track Rate:</div>
<div class="vl" style="top:1133.10px">0.00</div>
<div class="lb" style="top:1150.10px">Roll:</div>
<div class="vl" style="top:1150.10px">-0.5</div>
<div class="hd" style="top:1174.30px">STUFF</div>
<div class="lb" style="top:1199.10px">Nav. Modes:</div>
<div class="vl" style="top:1216.10px">autopilot,vnav,tcas</div>
<div class="lb" style="top:1233.10px">ADS-B Ver.:</div>
<div class="vl" style="top:1233.10px">v2 (DO-260B)</div>
<div class="lb" style="top:1250.10px">Category:</div>
<div class="vl" style="top:1250.10px">A3</div>
<div class="lb" style="top:1267.60px">Large (75&#8201;000 to</div>
<div class="lb" style="top:1281.10px">300&#8201;000 lb)</div>
<div class="hd" style="top:1304.30px">ACCURACY</div>
<div class="lb" style="top:1329.60px">NAC<sub>P</sub>:</div>
<div class="vl" style="top:1329.60px">EPU &lt; 10 m</div>
<div class="lb" style="top:1350.10px">SIL:</div>
<div class="vl" style="top:1350.10px">&le; 1e-7</div>
<div class="lb" style="top:1367.60px">NAC<sub>V</sub>:</div>
<div class="vl" style="top:1367.60px">&lt; 3 m/s</div>
<div class="lb" style="top:1387.10px">NIC<sub>BARO</sub>:</div>
<div class="vl" style="top:1387.10px">cross-checked</div>
<div class="lb" style="top:1408.60px">R<sub>C</sub>:</div>
<div class="vl" style="top:1408.60px">186&#8201;m</div>
</div>
<div id="sb"><div id="thumb"></div>
<svg style="position:absolute;left:2px;top:2px" width="10" height="8"><path d="M1,6 L5,2 L9,6 Z" fill="#a3a3a3"/></svg>
<svg style="position:absolute;left:2px;top:1428px" width="10" height="8"><path d="M1,2 L5,6 L9,2 Z" fill="#505050"/></svg>
</div>
</body></html>
